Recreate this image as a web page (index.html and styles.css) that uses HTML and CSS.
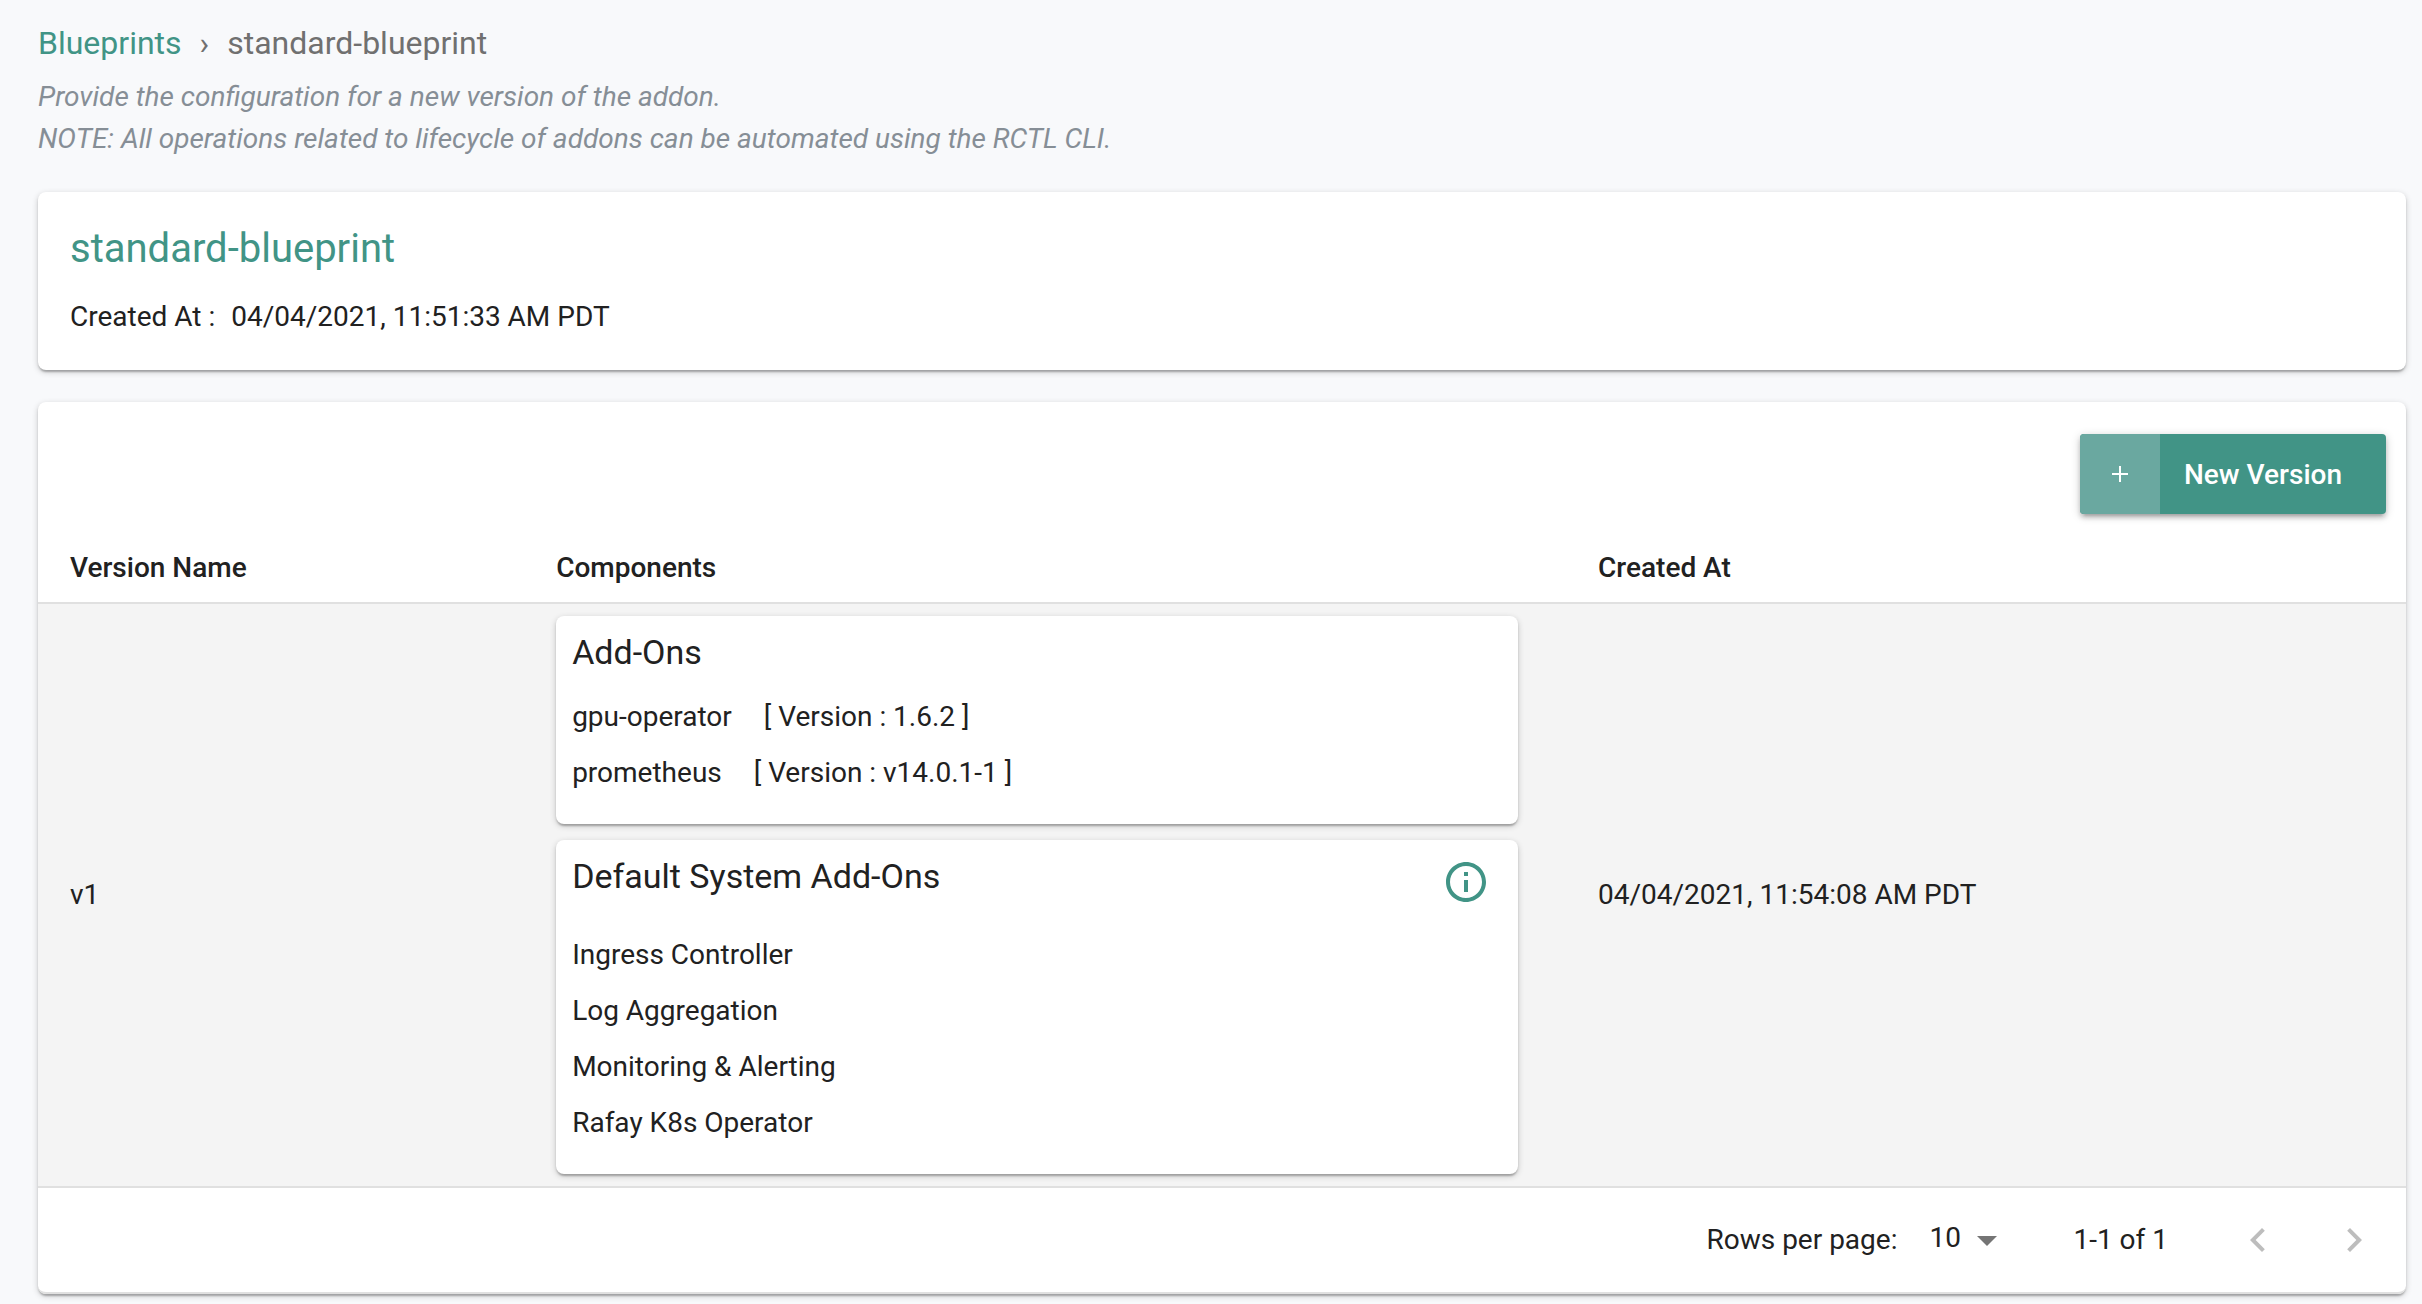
FILE: index.html
```html
<!DOCTYPE html>
<html lang="en">
<head>
  <meta charset="utf-8">
  <meta name="viewport" content="width=device-width, initial-scale=1">
  <title>standard-blueprint</title>
  <link rel="stylesheet" href="styles.css">
</head>
<body>
  <main class="page">
    <header class="page-header">
      <nav class="breadcrumb" aria-label="Breadcrumb">
        <a class="breadcrumb-link" href="#">Blueprints</a>
        <span class="breadcrumb-separator" aria-hidden="true">›</span>
        <span aria-current="page">standard-blueprint</span>
      </nav>
      <p class="intro">Provide the configuration for a new version of the addon.<br>NOTE: All operations related to lifecycle of addons can be automated using the RCTL CLI.</p>
    </header>

    <section class="card summary">
      <h1 class="summary-title">standard-blueprint</h1>
      <div class="summary-meta"><span>Created At :</span><span>04/04/2021, 11:51:33 AM PDT</span></div>
    </section>

    <section class="card versions">
      <div class="toolbar">
        <button class="new-version" type="button">
          <span class="new-version-icon">
            <svg width="16" height="16" viewBox="0 0 16 16" aria-hidden="true"><path d="M8 0v16M0 8h16" fill="none" stroke="currentColor" stroke-width="2"/></svg>
          </span>
          <span class="new-version-label">New Version</span>
        </button>
      </div>

      <table class="table">
        <colgroup>
          <col class="col-name">
          <col class="col-components">
          <col>
        </colgroup>
        <thead>
          <tr>
            <th scope="col">Version Name</th>
            <th scope="col">Components</th>
            <th scope="col">Created At</th>
          </tr>
        </thead>
        <tbody>
          <tr>
            <td>v1</td>
            <td>
              <div class="components">
                <section class="card component">
                  <h2 class="component-title">Add-Ons</h2>
                  <ul class="component-list">
                    <li><span>gpu-operator</span><span>[ Version : 1.6.2 ]</span></li>
                    <li><span>prometheus</span><span>[ Version : v14.0.1-1 ]</span></li>
                  </ul>
                </section>
                <section class="card component">
                  <div class="component-header">
                    <h2 class="component-title">Default System Add-Ons</h2>
                    <button class="info-button" type="button" aria-label="About default system add-ons">
                      <svg width="48" height="48" viewBox="0 0 24 24" fill="currentColor" aria-hidden="true"><path d="M11 17h2v-6h-2v6zm1-15C6.480 2 2 6.480 2 12s4.480 10 10 10 10-4.480 10-10S17.520 2 12 2zm0 18c-4.410 0-8-3.590-8-8s3.590-8 8-8 8 3.590 8 8-3.590 8-8 8zM11 9h2V7h-2v2z"/></svg>
                    </button>
                  </div>
                  <ul class="component-list">
                    <li>Ingress Controller</li>
                    <li>Log Aggregation</li>
                    <li>Monitoring &amp; Alerting</li>
                    <li>Rafay K8s Operator</li>
                  </ul>
                </section>
              </div>
            </td>
            <td>04/04/2021, 11:54:08 AM PDT</td>
          </tr>
        </tbody>
      </table>

      <div class="pagination">
        <label for="rows-per-page">Rows per page:</label>
        <div class="rows-select">
          <select id="rows-per-page">
            <option selected>10</option>
            <option>25</option>
            <option>50</option>
          </select>
          <svg class="rows-arrow" width="48" height="48" viewBox="0 0 24 24" fill="currentColor" aria-hidden="true"><path d="M7 10l5 5 5-5z"/></svg>
        </div>
        <span>1-1 of 1</span>
        <div class="pager">
          <button class="pager-button" type="button" aria-label="Previous page" disabled>
            <svg width="48" height="48" viewBox="0 0 24 24" fill="currentColor" aria-hidden="true"><path d="M15.410 16.590L10.830 12l4.580-4.590L14 6l-6 6 6 6 1.410-1.410z"/></svg>
          </button>
          <button class="pager-button" type="button" aria-label="Next page" disabled>
            <svg width="48" height="48" viewBox="0 0 24 24" fill="currentColor" aria-hidden="true"><path d="M8.590 16.590L13.170 12 8.590 7.410 10 6l6 6-6 6-1.410-1.410z"/></svg>
          </button>
        </div>
      </div>
    </section>
  </main>
</body>
</html>
```
FILE: styles.css
```css
:root {
  --teal: #419486;
  --teal-light: #6aa8a0;
  --text: #212121;
  --line: #e0e0e0;
}

* {
  box-sizing: border-box;
}

body {
  margin: 0;
  background: #f8f9fb;
  color: var(--text);
  font-family: Roboto, "Liberation Sans", sans-serif;
  font-size: 28px;
  line-height: 42px;
}

button,
select {
  margin: 0;
  padding: 0;
  border: 0;
  background: none;
  color: inherit;
  font: inherit;
}

svg {
  display: block;
}

.page {
  padding: 19px 16px 10px 38px;
}

.page-header {
  margin-bottom: 32px;
}

.breadcrumb {
  display: flex;
  gap: 18px;
  margin-bottom: 9px;
  color: #707070;
  font-size: 32px;
  line-height: 48px;
}

.breadcrumb-link {
  color: var(--teal);
  text-decoration: none;
}

.intro {
  margin: 0;
  color: #868e96;
  font-style: italic;
}

.card {
  border-radius: 8px;
  background: #fff;
  box-shadow: 0 2px 6px rgba(0, 0, 0, 0.2), 0 2px 2px rgba(0, 0, 0, 0.14), 0 4px 2px -2px rgba(0, 0, 0, 0.12);
}

.summary {
  margin-bottom: 32px;
  padding: 32px;
}

.summary-title {
  margin: 0 0 22px;
  color: var(--teal);
  font-size: 40px;
  font-weight: 400;
  line-height: 50px;
}

.summary-meta {
  display: flex;
  gap: 16px;
}

.toolbar {
  display: flex;
  justify-content: flex-end;
  padding: 32px 20px 16px;
}

.new-version {
  display: flex;
  min-width: 306px;
  overflow: hidden;
  border-radius: 4px;
  background: var(--teal);
  box-shadow: 0 2px 10px rgba(0, 0, 0, 0.2), 0 4px 4px rgba(0, 0, 0, 0.14), 0 6px 2px -4px rgba(0, 0, 0, 0.12);
  color: #fff;
  font-weight: 500;
  line-height: 80px;
}

.new-version-icon {
  display: grid;
  place-items: center;
  width: 80px;
  height: 80px;
  background: var(--teal-light);
}

.new-version-label {
  flex: 1;
  padding: 1px 40px 0 20px;
  line-height: 79px;
}

.table {
  width: 100%;
  border-collapse: separate;
  border-spacing: 0;
  table-layout: fixed;
}

.col-name {
  width: 20.53%;
}

.col-components {
  width: 44%;
}

th,
td {
  padding: 12px 48px 12px 32px;
  border-bottom: 2px solid var(--line);
  text-align: left;
  vertical-align: middle;
}

th {
  padding-top: 14px;
  padding-bottom: 10px;
  font-weight: 500;
  line-height: 48px;
}

td {
  background: #f4f4f4;
}

.components {
  display: grid;
  gap: 16px;
}

.component {
  padding: 12px 16px 23px;
}

.component-header {
  display: flex;
  align-items: flex-start;
  justify-content: space-between;
  margin-bottom: 15px;
  padding-right: 6px;
}

.component-title {
  margin: 0;
  font-size: 34px;
  font-weight: 400;
  line-height: 48px;
}

.component-title + .component-list {
  margin-top: 13px;
}

.component-list {
  margin: 0;
  padding: 0;
  line-height: 56px;
  list-style: none;
}

.component-list li {
  display: flex;
  gap: 32px;
}

.info-button {
  padding: 6px;
  color: var(--teal);
}

.pagination {
  display: flex;
  align-items: center;
  justify-content: flex-end;
  height: 106px;
  padding-right: 4px;
  border-bottom: 2px solid var(--line);
  border-radius: 0 0 8px 8px;
}

.rows-select {
  position: relative;
  margin: 0 62px 0 16px;
}

.rows-select select {
  height: 48px;
  padding: 0 50px 4px 16px;
  appearance: none;
}

.rows-arrow {
  position: absolute;
  top: 0;
  right: 0;
  color: #757575;
  pointer-events: none;
}

.pager {
  display: flex;
  margin-left: 42px;
}

.pager-button {
  padding: 24px;
  color: #bdbdbd;
}
```
